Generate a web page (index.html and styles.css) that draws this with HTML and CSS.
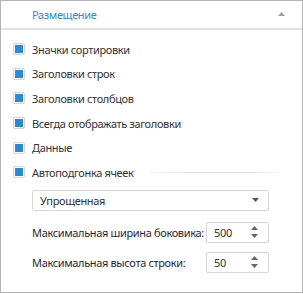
FILE: index.html
```html
<!DOCTYPE html>
<html>
<head>
<meta charset="utf-8">
<link rel="stylesheet" href="styles.css">
</head>
<body>
<div class="panel">
  <div class="header">
    <span class="title">Размещение</span>
    <svg class="collapse" width="7" height="4" viewBox="0 0 7 4"><path d="M0 4 L3.5 0 L7 4 Z" fill="#a0a0a0"/></svg>
  </div>
  <div class="body">
    <div class="check"><span class="box"></span><span>Значки сортировки</span></div>
    <div class="check"><span class="box"></span><span>Заголовки строк</span></div>
    <div class="check"><span class="box"></span><span>Заголовки столбцов</span></div>
    <div class="check"><span class="box"></span><span>Всегда отображать заголовки</span></div>
    <div class="check"><span class="box"></span><span>Данные</span></div>
    <div class="check group"><span class="box"></span><span>Автоподгонка ячеек</span><span class="rule"></span></div>
    <div class="sub">
      <div class="select"><span>Упрощенная</span>
        <svg width="7" height="4" viewBox="0 0 7 4"><path d="M0 0 L7 0 L3.5 4 Z" fill="#555"/></svg>
      </div>
      <div class="field"><span class="label">Максимальная ширина боковика:</span>
        <div class="spin"><span>500</span>
          <svg width="7" height="12" viewBox="0 0 7 12"><path d="M0 4 L3.5 0 L7 4 Z M0 8 L7 8 L3.5 12 Z" fill="#666"/></svg>
        </div>
      </div>
      <div class="field"><span class="label">Максимальная высота строки:</span>
        <div class="spin"><span>50</span>
          <svg width="7" height="12" viewBox="0 0 7 12"><path d="M0 4 L3.5 0 L7 4 Z M0 8 L7 8 L3.5 12 Z" fill="#666"/></svg>
        </div>
      </div>
    </div>
  </div>
</div>
</body>
</html>
```
FILE: styles.css
```css
* { box-sizing: border-box; }
html, body { margin: 0; padding: 0; background: #fff; }
body {
  font-family: "Noto Sans", "Open Sans", sans-serif;
  font-size: 11px;
  letter-spacing: -0.35px;
  color: #333;
  white-space: nowrap;
}
.panel {
  width: 303px;
  height: 293px;
  border: 1px solid #b4b4b4;
  background: #fff;
}
.header {
  height: 29px;
  border-bottom: 2px solid #e2e2e2;
  display: flex;
  align-items: center;
  justify-content: space-between;
  padding: 0 17px 0 31px;
}
.title { color: #2d8ad8; font-size: 11px; }
.collapse { margin-top: -2px; }
.body { padding: 7px 0 0 12px; }
.check {
  display: flex;
  align-items: center;
  height: 24.6px;
}
.box {
  width: 12px;
  height: 12px;
  border: 1px solid #d4d4d4;
  border-radius: 2px;
  margin-right: 7px;
  display: flex;
  align-items: center;
  justify-content: center;
  background: #fff;
}
.box::after {
  content: "";
  width: 8px;
  height: 8px;
  background: #2b8ad6;
}
.rule {
  flex: 0 0 auto;
  width: 130px;
  height: 1px;
  margin-left: 16px;
  background: linear-gradient(to right, rgba(220,220,220,0.3), #e4e4e4 30%, #e4e4e4 80%, rgba(230,230,230,0.3));
}
.sub { padding: 5px 0 0 19px; }
.select {
  width: 237px;
  height: 21px;
  border: 1px solid #d6d6d6;
  border-radius: 2px;
  display: flex;
  align-items: center;
  justify-content: space-between;
  padding: 0 9px 0 7px;
  color: #333;
}
.field {
  display: flex;
  align-items: center;
  margin-top: 11px;
  height: 21px;
}
.field + .field { margin-top: 9px; }
.label { width: 174px; color: #1f1f3a; }
.spin {
  width: 63px;
  height: 21px;
  border: 1px solid #d6d6d6;
  border-radius: 2px;
  display: flex;
  align-items: center;
  justify-content: space-between;
  padding: 0 10px 0 7px;
  color: #333;
}
```
